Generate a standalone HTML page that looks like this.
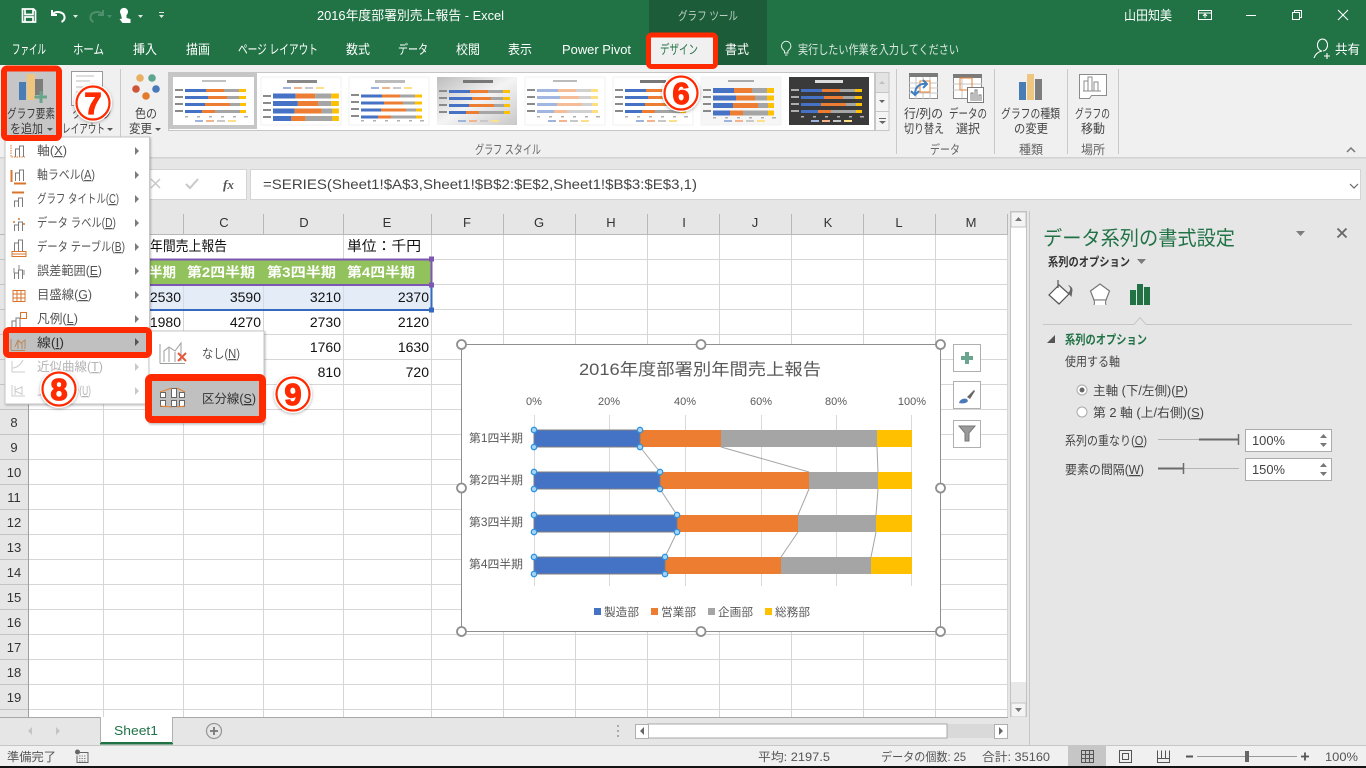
<!DOCTYPE html>
<html lang="ja"><head><meta charset="utf-8"><title>Excel</title>
<style>
html,body{margin:0;padding:0;width:1366px;height:768px;overflow:hidden;background:#fff}
svg{display:block;position:absolute;left:0;top:0}
text{font-family:"Liberation Sans","Noto Sans CJK JP",sans-serif;font-size:12.5px;fill:#444}
.w{fill:#fff;font-size:13px}
.m{font-size:12.5px;fill:#555}
.d{font-size:12.5px;fill:#b4b4b4}
.c{font-size:14px;fill:#111}
.h{font-size:13.5px;fill:#fff;font-weight:700}
.k{font-size:13px;fill:#333;text-anchor:middle}
.a{font-size:11px;fill:#595959;text-anchor:middle}
.g{font-size:11.5px;fill:#595959}
.s{font-size:12px;fill:#555}
.p{font-size:12.5px;fill:#444}
.n{font-family:"Liberation Sans",sans-serif;font-weight:700;font-size:31px;fill:#ff2a00;stroke:#ff2a00;stroke-width:1.2px;text-anchor:middle}
.u{text-decoration:underline}
</style></head><body>
<svg width="1366" height="768" viewBox="0 0 1366 768" xmlns="http://www.w3.org/2000/svg">
<defs>
<filter id="sh" x="-30%" y="-30%" width="160%" height="160%"><feDropShadow dx="0" dy="1" stdDeviation="1.6" flood-color="#000" flood-opacity=".3"/></filter>
<filter id="ms" x="-5%" y="-5%" width="110%" height="110%"><feDropShadow dx="1" dy="1" stdDeviation="1" flood-color="#000" flood-opacity=".25"/></filter>
<filter id="bl" x="-5%" y="-20%" width="110%" height="140%"><feGaussianBlur stdDeviation=".35"/></filter>
<linearGradient id="gr" x1="0" x2="1" y1="0" y2="1"><stop offset="0" stop-color="#bdbdbd"/><stop offset=".5" stop-color="#f4f4f4"/><stop offset="1" stop-color="#c8c8c8"/></linearGradient>
<g id="rows" filter="url(#bl)">
<rect x="0" y="0" width="21" height="3" fill="#4472c4"/><rect x="21" y="0" width="18" height="3" fill="#ed7d31"/><rect x="39" y="0" width="15" height="3" fill="#a5a5a5"/><rect x="54" y="0" width="7" height="3" fill="#ffc000"/>
<rect x="0" y="7" width="23" height="3" fill="#4472c4"/><rect x="23" y="7" width="19" height="3" fill="#ed7d31"/><rect x="42" y="7" width="12" height="3" fill="#a5a5a5"/><rect x="54" y="7" width="7" height="3" fill="#ffc000"/>
<rect x="0" y="14" width="20" height="3" fill="#4472c4"/><rect x="20" y="14" width="25" height="3" fill="#ed7d31"/><rect x="45" y="14" width="10" height="3" fill="#a5a5a5"/><rect x="55" y="14" width="6" height="3" fill="#ffc000"/>
<rect x="0" y="21" width="17" height="3" fill="#4472c4"/><rect x="17" y="21" width="13" height="3" fill="#ed7d31"/><rect x="30" y="21" width="25" height="3" fill="#a5a5a5"/><rect x="55" y="21" width="6" height="3" fill="#ffc000"/>
</g>
<g id="rows2" filter="url(#bl)">
<rect x="0" y="0" width="21" height="5" fill="#4472c4"/><rect x="21" y="0" width="18" height="5" fill="#ed7d31"/><rect x="39" y="0" width="15" height="5" fill="#a5a5a5"/><rect x="54" y="0" width="7" height="5" fill="#ffc000"/>
<rect x="0" y="7.500" width="23" height="5" fill="#4472c4"/><rect x="23" y="7.500" width="19" height="5" fill="#ed7d31"/><rect x="42" y="7.500" width="12" height="5" fill="#a5a5a5"/><rect x="54" y="7.500" width="7" height="5" fill="#ffc000"/>
<rect x="0" y="15" width="20" height="5" fill="#4472c4"/><rect x="20" y="15" width="25" height="5" fill="#ed7d31"/><rect x="45" y="15" width="10" height="5" fill="#a5a5a5"/><rect x="55" y="15" width="6" height="5" fill="#ffc000"/>
<rect x="0" y="22.500" width="17" height="5" fill="#4472c4"/><rect x="17" y="22.500" width="13" height="5" fill="#ed7d31"/><rect x="30" y="22.500" width="25" height="5" fill="#a5a5a5"/><rect x="55" y="22.500" width="6" height="5" fill="#ffc000"/>
</g>
<g id="lab" fill="#8a8a8a" filter="url(#bl)"><rect x="0" y="0" width="8" height="2"/><rect x="0" y="7" width="8" height="2"/><rect x="0" y="14" width="8" height="2"/><rect x="0" y="21" width="8" height="2"/></g>
<g id="leg" filter="url(#bl)"><rect x="0" y="0" width="8" height="2" fill="#9fb4dc"/><rect x="11" y="0" width="8" height="2" fill="#f3b48b"/><rect x="22" y="0" width="8" height="2" fill="#c8c8c8"/><rect x="33" y="0" width="8" height="2" fill="#ffe08a"/></g>
<g id="ax" fill="#b0b0b0" filter="url(#bl)"><rect x="0" y="0" width="3" height="1.500"/><rect x="12" y="0" width="3" height="1.500"/><rect x="24" y="0" width="3" height="1.500"/><rect x="36" y="0" width="3" height="1.500"/><rect x="48" y="0" width="3" height="1.500"/><rect x="59" y="0" width="4" height="1.500"/></g>
</defs>

<!-- title bar and tabs -->
<rect x="0" y="0" width="1366" height="65" fill="#217346"/>
<rect x="649" y="0" width="118" height="65" fill="#1d5c39"/>
<text class="w" x="317" y="20" textLength="187" lengthAdjust="spacingAndGlyphs">2016年度部署別売上報告  -  Excel</text>
<text class="w" x="678" y="20" textLength="60" lengthAdjust="spacingAndGlyphs" style="fill:#b9cfc2;font-size:12px">グラフ ツール</text>
<text class="w" x="1124" y="20" textLength="48" lengthAdjust="spacingAndGlyphs">山田知美</text>
<!-- QAT -->
<path d="M22.500 9h11l2 2v11h-13zM25 9.500v5h8v-5M25 22v-5h8v5" fill="none" stroke="#fff" stroke-width="1.700"/>
<path d="M52 10v5h5M52.500 14.500c3-4 11-3 12 2 .4 2.500-1 4.500-3 5.500" fill="none" stroke="#fff" stroke-width="2"/>
<path d="M73 15l5 0-2.500 3z" fill="#dfe9e3"/>
<path d="M103 10v5h-5M102.500 14.500c-3-4-11-3-12 2-.4 2.500 1 4.500 3 5.500" fill="none" stroke="#4f8f6c" stroke-width="2"/>
<path d="M107 15l5 0-2.500 3z" fill="#4f8f6c"/>
<path d="M120 12a4 4 0 1 1 6.500 3v3l4 1v4h-8l-3-4 2.500-.5z" fill="#fff"/>
<path d="M138 15l5 0-2.500 3z" fill="#dfe9e3"/>
<path d="M159 12h5v1h-5zM159 15l5 0-2.500 3z" fill="#dfe9e3"/>
<!-- window buttons -->
<path d="M1198.500 10.500h13v9h-13zM1198.500 13h13M1205 18v-4M1203 16l2-2 2 2" fill="none" stroke="#fff"/>
<path d="M1246 15.500h10" stroke="#fff"/>
<path d="M1292.500 12.500h7v7h-7zM1294.500 12.500v-2h7v7h-2" fill="none" stroke="#fff"/>
<path d="M1338 10l10 10M1348 10l-10 10" stroke="#fff" stroke-width="1.100"/>
<!-- tabs text -->
<text class="w" x="12" y="54" textLength="34" lengthAdjust="spacingAndGlyphs">ファイル</text>
<text class="w" x="73" y="54" textLength="31" lengthAdjust="spacingAndGlyphs">ホーム</text>
<text class="w" x="133" y="54" textLength="24" lengthAdjust="spacingAndGlyphs">挿入</text>
<text class="w" x="186" y="54" textLength="24" lengthAdjust="spacingAndGlyphs">描画</text>
<text class="w" x="238" y="54" textLength="80" lengthAdjust="spacingAndGlyphs">ページ レイアウト</text>
<text class="w" x="346" y="54" textLength="24" lengthAdjust="spacingAndGlyphs">数式</text>
<text class="w" x="398" y="54" textLength="30" lengthAdjust="spacingAndGlyphs">データ</text>
<text class="w" x="456" y="54" textLength="24" lengthAdjust="spacingAndGlyphs">校閲</text>
<text class="w" x="508" y="54" textLength="24" lengthAdjust="spacingAndGlyphs">表示</text>
<text class="w" x="562" y="54" textLength="69" lengthAdjust="spacingAndGlyphs">Power Pivot</text>
<text class="w" x="725" y="54" textLength="24" lengthAdjust="spacingAndGlyphs">書式</text>
<path d="M784.500 51c-2-2-3-3-3-5a4.700 4.700 0 0 1 9.400 0c0 2-1 3-3 5v2h-3.400zM785 55h2.500" fill="none" stroke="#e5efe9"/>
<text class="w" x="798" y="54" textLength="161" lengthAdjust="spacingAndGlyphs" style="fill:#dbe8e0;font-size:12.5px">実行したい作業を入力してください</text>
<path d="M1323 51a5 6 0 1 0-1 0c-5 1-7 4-8 7M1324 56h6M1327 53v6" fill="none" stroke="#fff" stroke-width="1.100"/>
<text class="w" x="1335" y="54" textLength="25" lengthAdjust="spacingAndGlyphs">共有</text>

<!-- ribbon -->
<rect x="0" y="65" width="1366" height="93" fill="#f0f0f0"/>
<rect x="0" y="157" width="1366" height="1.500" fill="#d2d2d2"/>
<rect x="0" y="158.500" width="1366" height="53" fill="#e6e6e6"/>
<g fill="#c9c9c9"><rect x="120" y="69" width="1" height="85"/><rect x="896" y="69" width="1" height="85"/><rect x="994" y="69" width="1" height="85"/><rect x="1067" y="69" width="1" height="85"/><rect x="1118" y="69" width="1" height="85"/></g>

<!-- add chart element -->
<rect x="7" y="71" width="49" height="64" fill="#c6c6c6"/>
<rect x="19" y="82" width="7" height="18" fill="#4a7db5"/><rect x="27" y="74" width="8" height="26" fill="#eec67f"/><rect x="35" y="79" width="8" height="16" fill="#7d7d7d"/>
<path d="M34.500 97h12.500M41 91v12" stroke="#69a48d" stroke-width="3" fill="none"/>
<text x="7" y="118" textLength="48" lengthAdjust="spacingAndGlyphs" style="fill:#3a3a3a">グラフ要素</text>
<text x="10" y="133" textLength="33" lengthAdjust="spacingAndGlyphs" style="fill:#3a3a3a">を追加</text>
<path d="M47 128h6l-3 3z" fill="#555"/>

<!-- quick layout -->
<rect x="71.500" y="71.500" width="31" height="34" fill="#fff" stroke="#9a9a9a"/>
<path d="M76 76h18M76 81h14M76 87h22M76 92h22M76 97h18" stroke="#bbb"/>
<text x="72" y="118" textLength="40" lengthAdjust="spacingAndGlyphs">クイック</text>
<text x="62" y="133" textLength="43" lengthAdjust="spacingAndGlyphs">レイアウト</text>
<path d="M107 128h6l-3 3z" fill="#555"/>

<!-- colors -->
<circle cx="140" cy="78" r="3.800" fill="#e8b060"/><circle cx="152" cy="78" r="3.800" fill="#5da58f"/><circle cx="136" cy="89" r="3.800" fill="#ce5539"/><circle cx="156" cy="89" r="3.800" fill="#4a78b8"/><circle cx="146" cy="96" r="3.800" fill="#e47a2b"/>
<text x="135" y="118" textLength="22" lengthAdjust="spacingAndGlyphs">色の</text>
<text x="129" y="133" textLength="23" lengthAdjust="spacingAndGlyphs">変更</text>
<path d="M155 128h6l-3 3z" fill="#555"/>

<!-- gallery -->
<rect x="168.500" y="72.500" width="706" height="58" fill="#fff" stroke="#c6c6c6"/>
<rect x="169" y="73" width="88" height="56" fill="#c6c6c6"/>
<rect x="173" y="77" width="81" height="48" fill="#fff"/>
<rect x="202" y="80" width="24" height="2" fill="#c0c0c0" filter="url(#bl)"/>
<use href="#rows" x="185" y="89"/><use href="#lab" x="175" y="89"/><use href="#ax" x="185" y="116"/><use href="#leg" x="195" y="120"/>

<rect x="261" y="77" width="80" height="48" fill="#fff" stroke="#f2f2f2"/>
<rect x="287" y="80" width="30" height="3" fill="#888" filter="url(#bl)"/><use href="#leg" x="283" y="87"/>
<g transform="translate(273 93.500) scale(1.080 1)"><use href="#rows2"/></g><use href="#lab" x="263" y="95"/>

<rect x="349" y="77" width="80" height="48" fill="#fff" stroke="#f2f2f2"/>
<rect x="375" y="80" width="30" height="3" fill="#bbb" filter="url(#bl)"/><use href="#leg" x="371" y="87"/>
<use href="#rows" x="361" y="94.500"/><use href="#lab" x="351" y="94"/><use href="#ax" x="361" y="120"/>

<rect x="437" y="77" width="80" height="48" fill="url(#gr)"/>
<rect x="463" y="80" width="30" height="3" fill="#777" filter="url(#bl)"/>
<use href="#rows" x="449" y="90"/><use href="#lab" x="439" y="90"/><use href="#leg" x="458" y="120"/>

<rect x="525" y="77" width="80" height="48" fill="#fff" stroke="#f2f2f2"/>
<rect x="553" y="80" width="24" height="2" fill="#bbb" filter="url(#bl)"/>
<g opacity=".5"><use href="#rows" x="537" y="89"/></g><use href="#lab" x="527" y="89"/><use href="#ax" x="537" y="116"/><use href="#leg" x="548" y="120"/>

<rect x="613" y="77" width="80" height="48" fill="#fff" stroke="#f2f2f2"/>
<rect x="640" y="80" width="26" height="3" fill="#777" filter="url(#bl)"/>
<use href="#rows" x="625" y="89"/><use href="#lab" x="615" y="89"/><use href="#ax" x="625" y="116"/><use href="#leg" x="636" y="120"/>

<rect x="701" y="77" width="80" height="48" fill="#f6f6f6" stroke="#f2f2f2"/>
<rect x="728" y="80" width="26" height="2" fill="#aaa" filter="url(#bl)"/>
<use href="#rows2" x="713" y="88"/><use href="#lab" x="703" y="89"/><use href="#ax" x="713" y="117"/><use href="#leg" x="724" y="120"/>

<rect x="789" y="77" width="80" height="48" fill="#3a3a3a"/>
<rect x="815" y="80" width="28" height="3" fill="#ddd" filter="url(#bl)"/>
<use href="#rows" x="801" y="89"/><g style="opacity:.8"><rect x="791" y="89" width="8" height="2" fill="#ccc"/><rect x="791" y="96" width="8" height="2" fill="#ccc"/><rect x="791" y="103" width="8" height="2" fill="#ccc"/><rect x="791" y="110" width="8" height="2" fill="#ccc"/></g><use href="#ax" x="801" y="116"/><use href="#leg" x="811" y="120"/>

<rect x="875.500" y="72.500" width="13.500" height="20" fill="#e3e3e3" stroke="#c6c6c6"/>
<rect x="875.500" y="92.500" width="13.500" height="19" fill="#f4f4f4" stroke="#c6c6c6"/>
<rect x="875.500" y="111.500" width="13.500" height="19" fill="#f4f4f4" stroke="#c6c6c6"/>
<path d="M879 84h6l-3-3z" fill="#c0c0c0"/><path d="M879 100h6l-3 3z" fill="#666"/><path d="M879 118h7v1h-7zM879 121h7l-3.500 3z" fill="#666"/>
<text x="475" y="154" textLength="66" lengthAdjust="spacingAndGlyphs" style="fill:#666">グラフ スタイル</text>

<!-- right ribbon icons -->
<rect x="909.500" y="73.500" width="28" height="25" fill="#fff" stroke="#8c8c8c"/><rect x="909" y="73" width="29" height="4" fill="#7b7b7b"/>
<path d="M909 83h29M909 88h29M909 93h29M916 77v22M923 77v22M930 77v22" stroke="#c4c4c4"/>
<rect x="920" y="81" width="10" height="11" fill="#fff" stroke="#e8822f"/>
<path d="M915 94c0-7 5-11 11-10M923 80l4 4-4 4M911 91l4 4 4-4" fill="none" stroke="#3f7fc0" stroke-width="2"/>
<rect x="953.500" y="74.500" width="28" height="24" fill="#fff" stroke="#8c8c8c"/><rect x="953" y="74" width="29" height="4" fill="#7b7b7b"/>
<path d="M953 84h29M953 90h29M962 78v20M972 78v20" stroke="#c4c4c4"/>
<rect x="960" y="78" width="12" height="12" fill="none" stroke="#e8822f"/>
<rect x="967.500" y="87.500" width="16" height="15" fill="#fff" stroke="#7b7b7b"/>
<path d="M971 101v-8h2v8M975 101v-11h2v11M979 101v-6h2v6" fill="none" stroke="#7b7b7b"/>
<rect x="1019" y="82" width="7" height="18" fill="#4a7db5"/><rect x="1027" y="74" width="7" height="26" fill="#eec67f"/><rect x="1035" y="79" width="7" height="21" fill="#7d7d7d"/>
<path d="M1079.500 74.500h27v21h-15l-2 3h-10z" fill="#fff" stroke="#8c8c8c"/>
<path d="M1084 91v-10h4v10M1088 91v-14h4v14M1094 91v-9h4v9M1083 91h18" fill="none" stroke="#8c8c8c"/>
<text x="904" y="118" textLength="39" lengthAdjust="spacingAndGlyphs">行/列の</text>
<text x="904" y="133" textLength="40" lengthAdjust="spacingAndGlyphs">切り替え</text>
<text x="949" y="118" textLength="38" lengthAdjust="spacingAndGlyphs">データの</text>
<text x="956" y="133" textLength="24" lengthAdjust="spacingAndGlyphs">選択</text>
<text x="1001" y="118" textLength="59" lengthAdjust="spacingAndGlyphs">グラフの種類</text>
<text x="1014" y="133" textLength="34" lengthAdjust="spacingAndGlyphs">の変更</text>
<text x="1075" y="118" textLength="35" lengthAdjust="spacingAndGlyphs">グラフの</text>
<text x="1081" y="133" textLength="24" lengthAdjust="spacingAndGlyphs">移動</text>
<text x="930" y="154" textLength="30" lengthAdjust="spacingAndGlyphs" style="fill:#666">データ</text>
<text x="1019" y="154" textLength="24" lengthAdjust="spacingAndGlyphs" style="fill:#666">種類</text>
<text x="1081" y="154" textLength="24" lengthAdjust="spacingAndGlyphs" style="fill:#666">場所</text>
<path d="M1347 152l4-4 4 4" fill="none" stroke="#777" stroke-width="1.500"/>

<!-- formula bar -->
<rect x="120.500" y="169.500" width="126" height="30" fill="#fff" stroke="#d4d4d4"/>
<rect x="250.500" y="169.500" width="1110" height="30" fill="#fff" stroke="#d4d4d4"/>
<path d="M151 179l9 9M160 179l-9 9" stroke="#c8c8c8" stroke-width="1.500"/>
<path d="M186 184l4 4 8-9" fill="none" stroke="#c8c8c8" stroke-width="2"/>
<text x="223" y="189" textLength="11" lengthAdjust="spacingAndGlyphs" style="font-family:'Liberation Serif',serif;font-style:italic;font-weight:700;font-size:13px;fill:#555">fx</text>
<text x="263" y="189" textLength="434" lengthAdjust="spacingAndGlyphs" style="font-size:14px;fill:#444">=SERIES(Sheet1!$A$3,Sheet1!$B$2:$E$2,Sheet1!$B$3:$E$3,1)</text>
<path d="M1350 184l4 4 4-4" fill="none" stroke="#666" stroke-width="1.200"/>

<!-- sheet -->
<rect x="0" y="211" width="1030" height="506" fill="#e6e6e6"/>
<rect x="29" y="235" width="979" height="482" fill="#fff"/>
<g stroke="#d6d6d6" fill="none">
<path d="M29 259.500H1008M29 284.500H1008M29 309.500H1008M29 334.500H1008M29 359.500H1008M29 384.500H1008M29 409.500H1008M29 434.500H1008M29 459.500H1008M29 484.500H1008M29 509.500H1008M29 534.500H1008M29 559.500H1008M29 584.500H1008M29 609.500H1008M29 634.500H1008M29 659.500H1008M29 684.500H1008M29 709.500H1008"/>
<path d="M103.500 259V717M183.500 259V717M263.500 259V717M343.500 235V717M431.500 235V717M503.500 235V717M575.500 235V717M647.500 235V717M719.500 235V717M791.500 235V717M863.500 235V717M935.500 235V717M1007.500 235V717"/>
</g>
<!-- header cols -->
<g stroke="#b8b8b8"><path d="M0 234.500H1008M103.500 214V234M183.500 214V234M263.500 214V234M343.500 214V234M431.500 214V234M503.500 214V234M575.500 214V234M647.500 214V234M719.500 214V234M791.500 214V234M863.500 214V234M935.500 214V234M1007.500 214V234"/></g>
<path d="M28.500 235V717" stroke="#9e9e9e"/>
<g stroke="#c4c4c4"><path d="M0 259.500H28M0 284.500H28M0 309.500H28M0 334.500H28M0 359.500H28M0 384.500H28M0 409.500H28M0 434.500H28M0 459.500H28M0 484.500H28M0 509.500H28M0 534.500H28M0 559.500H28M0 584.500H28M0 609.500H28M0 634.500H28M0 659.500H28M0 684.500H28M0 709.500H28"/></g>
<text class="k" x="224" y="227">C</text><text class="k" x="304" y="227">D</text><text class="k" x="387" y="227">E</text><text class="k" x="467" y="227">F</text><text class="k" x="539" y="227">G</text><text class="k" x="611" y="227">H</text><text class="k" x="684" y="227">I</text><text class="k" x="755" y="227">J</text><text class="k" x="828" y="227">K</text><text class="k" x="899" y="227">L</text><text class="k" x="971" y="227">M</text>
<g><text class="k" x="14" y="427">8</text><text class="k" x="14" y="452">9</text><text class="k" x="14" y="477">10</text><text class="k" x="14" y="502">11</text><text class="k" x="14" y="527">12</text><text class="k" x="14" y="552">13</text><text class="k" x="14" y="577">14</text><text class="k" x="14" y="602">15</text><text class="k" x="14" y="627">16</text><text class="k" x="14" y="652">17</text><text class="k" x="14" y="677">18</text><text class="k" x="14" y="702">19</text><text class="k" x="14" y="726">20</text></g>

<!-- cell content -->
<rect x="104" y="260" width="327" height="25" fill="#92c25b"/>
<rect x="104" y="286" width="327" height="23" fill="#e4ecf7"/>
<path d="M183.500 286V309M263.500 286V309M343.500 286V309" stroke="#d3dce8"/>
<text class="c" x="150" y="251" textLength="77" lengthAdjust="spacingAndGlyphs">年間売上報告</text>
<text class="c" x="347" y="251" textLength="74" lengthAdjust="spacingAndGlyphs">単位：千円</text>
<text class="h" x="149" y="277" textLength="27" lengthAdjust="spacingAndGlyphs">半期</text>
<text class="h" x="187" y="277" textLength="68" lengthAdjust="spacingAndGlyphs">第2四半期</text>
<text class="h" x="267" y="277" textLength="69" lengthAdjust="spacingAndGlyphs">第3四半期</text>
<text class="h" x="347" y="277" textLength="68" lengthAdjust="spacingAndGlyphs">第4四半期</text>
<g>
<text class="c" x="181" y="302" style="text-anchor:end">2530</text><text class="c" x="261" y="302" style="text-anchor:end">3590</text><text class="c" x="341" y="302" style="text-anchor:end">3210</text><text class="c" x="429" y="302" style="text-anchor:end">2370</text>
<text class="c" x="181" y="327" style="text-anchor:end">1980</text><text class="c" x="261" y="327" style="text-anchor:end">4270</text><text class="c" x="341" y="327" style="text-anchor:end">2730</text><text class="c" x="429" y="327" style="text-anchor:end">2120</text>
<text class="c" x="341" y="352" style="text-anchor:end">1760</text><text class="c" x="429" y="352" style="text-anchor:end">1630</text>
<text class="c" x="341" y="377" style="text-anchor:end">810</text><text class="c" x="429" y="377" style="text-anchor:end">720</text>
</g>
<rect x="104" y="258.500" width="327" height="2" fill="#7e57b4"/><rect x="104" y="284" width="327" height="2" fill="#7e57b4"/>
<rect x="430.500" y="260" width="2" height="24" fill="#7e57b4"/>
<rect x="104" y="309" width="327" height="2" fill="#3568c0"/><rect x="430.500" y="287" width="2" height="23" fill="#3568c0"/>
<rect x="429" y="256.500" width="5" height="5" fill="#7e57b4"/><rect x="429" y="282.500" width="5" height="5" fill="#7e57b4"/><rect x="429" y="307.500" width="5" height="5" fill="#3568c0"/>

<!-- chart -->
<rect x="461.500" y="344.500" width="479" height="287" fill="#fff" stroke="#8f8f8f"/>
<text x="579" y="375" textLength="242" lengthAdjust="spacingAndGlyphs" style="font-size:16.500px;fill:#595959">2016年度部署別年間売上報告</text>
<g stroke="#d9d9d9"><path d="M534.500 415V586M609.500 415V586M685.500 415V586M761.500 415V586M836.500 415V586M911.500 415V586"/></g>
<text class="a" x="534" y="405">0%</text><text class="a" x="609" y="405">20%</text><text class="a" x="685" y="405">40%</text><text class="a" x="761" y="405">60%</text><text class="a" x="836" y="405">80%</text><text class="a" x="912" y="405">100%</text>
<text class="g" x="469" y="442" textLength="54" lengthAdjust="spacingAndGlyphs">第1四半期</text>
<text class="g" x="469" y="484" textLength="54" lengthAdjust="spacingAndGlyphs">第2四半期</text>
<text class="g" x="469" y="526" textLength="54" lengthAdjust="spacingAndGlyphs">第3四半期</text>
<text class="g" x="469" y="568" textLength="54" lengthAdjust="spacingAndGlyphs">第4四半期</text>
<rect x="534" y="430" width="106" height="17" fill="#4472c4"/><rect x="640" y="430" width="81" height="17" fill="#ed7d31"/><rect x="721" y="430" width="156" height="17" fill="#a5a5a5"/><rect x="877" y="430" width="35" height="17" fill="#ffc000"/>
<rect x="534" y="472" width="126" height="17" fill="#4472c4"/><rect x="660" y="472" width="149" height="17" fill="#ed7d31"/><rect x="809" y="472" width="69" height="17" fill="#a5a5a5"/><rect x="878" y="472" width="34" height="17" fill="#ffc000"/>
<rect x="534" y="515" width="143" height="17" fill="#4472c4"/><rect x="677" y="515" width="121" height="17" fill="#ed7d31"/><rect x="798" y="515" width="78" height="17" fill="#a5a5a5"/><rect x="876" y="515" width="36" height="17" fill="#ffc000"/>
<rect x="534" y="557" width="131" height="17" fill="#4472c4"/><rect x="665" y="557" width="116" height="17" fill="#ed7d31"/><rect x="781" y="557" width="90" height="17" fill="#a5a5a5"/><rect x="871" y="557" width="41" height="17" fill="#ffc000"/>
<g fill="none" stroke="#a5a5a5"><path d="M640 447L660 472M721 447L809 472M877 447L878 472M660 489L677 515M809 489L798 515M878 489L876 515M677 532L665 557M798 532L781 557M876 532L871 557"/></g>
<g fill="none" stroke="#7f7f7f"><rect x="534" y="430" width="106" height="17"/><rect x="534" y="472" width="126" height="17"/><rect x="534" y="515" width="143" height="17"/><rect x="534" y="557" width="131" height="17"/></g>
<g fill="#a6d4f7" stroke="#2e93e0" stroke-width="1.300">
<circle cx="534" cy="430" r="2.700"/><circle cx="640" cy="430" r="2.700"/><circle cx="534" cy="447" r="2.700"/><circle cx="640" cy="447" r="2.700"/>
<circle cx="534" cy="472" r="2.700"/><circle cx="660" cy="472" r="2.700"/><circle cx="534" cy="489" r="2.700"/><circle cx="660" cy="489" r="2.700"/>
<circle cx="534" cy="515" r="2.700"/><circle cx="677" cy="515" r="2.700"/><circle cx="534" cy="532" r="2.700"/><circle cx="677" cy="532" r="2.700"/>
<circle cx="534" cy="557" r="2.700"/><circle cx="665" cy="557" r="2.700"/><circle cx="534" cy="574" r="2.700"/><circle cx="665" cy="574" r="2.700"/>
</g>
<rect x="594" y="608" width="7" height="7" fill="#4472c4"/><rect x="651" y="608" width="7" height="7" fill="#ed7d31"/><rect x="708" y="608" width="7" height="7" fill="#a5a5a5"/><rect x="765" y="608" width="7" height="7" fill="#ffc000"/>
<text class="g" x="604" y="616" textLength="35" lengthAdjust="spacingAndGlyphs">製造部</text>
<text class="g" x="661" y="616" textLength="35" lengthAdjust="spacingAndGlyphs">営業部</text>
<text class="g" x="718" y="616" textLength="35" lengthAdjust="spacingAndGlyphs">企画部</text>
<text class="g" x="775" y="616" textLength="35" lengthAdjust="spacingAndGlyphs">総務部</text>
<g fill="#fff" stroke="#8f8f8f" stroke-width="1.800">
<circle cx="461.500" cy="344.500" r="4.500"/><circle cx="701" cy="344.500" r="4.500"/><circle cx="940.500" cy="344.500" r="4.500"/><circle cx="461.500" cy="488" r="4.500"/><circle cx="940.500" cy="488" r="4.500"/><circle cx="461.500" cy="631.500" r="4.500"/><circle cx="701" cy="631.500" r="4.500"/><circle cx="940.500" cy="631.500" r="4.500"/>
</g>
<g fill="#fff" stroke="#b0b0b0"><rect x="953.500" y="344.500" width="27" height="27"/><rect x="953.500" y="381.500" width="27" height="27"/><rect x="953.500" y="420.500" width="27" height="27"/></g>
<path d="M967 352v12M961 358h12" stroke="#6aa590" stroke-width="4"/>
<path d="M959 403c1-4 5-5 8-4l1 2c-1 2-5 3-9 2z" fill="#4a78b8"/><path d="M967 397l7-7 1 1-5 8z" fill="#666"/>
<path d="M959 426h16l-6 7v8h-4v-8z" fill="#9a9a9a" stroke="#777"/>

<!-- scrollbar -->
<rect x="1010.500" y="211.500" width="16" height="506" fill="#e8e8e8" stroke="#c2c2c2"/>
<rect x="1011" y="227" width="15" height="455" fill="#fff"/>
<rect x="1011" y="212" width="15" height="15" fill="#f4f4f4" stroke="#c2c2c2"/>
<rect x="1011" y="703" width="15" height="14" fill="#f4f4f4" stroke="#c2c2c2"/>
<path d="M1015 221h7l-3.500-4z" fill="#777"/><path d="M1015 708h7l-3.500 4z" fill="#777"/>

<!-- sheet tabs -->
<rect x="0" y="717" width="1030" height="28" fill="#e6e6e6"/>
<path d="M0 717.500H1008" stroke="#a8a8a8"/>
<path d="M32 727v8l-4-4zM56 727v8l4-4z" fill="#c4c4c4"/>
<rect x="100" y="717" width="72" height="27" fill="#fff"/><rect x="100" y="742" width="73" height="2.500" fill="#217346"/>
<path d="M100.500 717v26M172.500 717v26" stroke="#b0b0b0"/>
<text x="114" y="735" textLength="44" lengthAdjust="spacingAndGlyphs" style="fill:#217346;font-size:13px">Sheet1</text>
<circle cx="214" cy="731" r="7.500" fill="none" stroke="#999" stroke-width="1.300"/><path d="M214 727v8M210 731h8" stroke="#777" stroke-width="1.800"/>
<path d="M618 725v2M618 730v2M618 735v2" stroke="#aaa" stroke-width="2"/>
<rect x="635" y="724" width="373" height="14" fill="#d9d9d9"/>
<rect x="648" y="724" width="299" height="14" fill="#fff" stroke="#a8a8a8"/>
<rect x="635.500" y="724.500" width="13" height="14" fill="#fff" stroke="#b0b0b0"/><rect x="994.500" y="724.500" width="13" height="14" fill="#fff" stroke="#b0b0b0"/>
<path d="M644 727v8l-4-4zM999 727v8l4-4z" fill="#666"/>

<!-- task pane -->
<rect x="1029" y="211" width="337" height="534" fill="#e6e6e6"/>
<path d="M1029.500 211V745" stroke="#c6c6c6"/>
<text x="1043" y="245" textLength="192" lengthAdjust="spacingAndGlyphs" style="font-size:20px;fill:#217346">データ系列の書式設定</text>
<path d="M1296 231h9l-4.500 5z" fill="#7c7c7c"/>
<path d="M1337.500 228.500l9 9M1346.500 228.500l-9 9" stroke="#666" stroke-width="1.800"/>
<text x="1048" y="266" textLength="82" lengthAdjust="spacingAndGlyphs" style="font-size:12px;font-weight:700;fill:#333">系列のオプション</text>
<path d="M1137 259h9l-4.500 5z" fill="#7c7c7c"/>
<path d="M1059 285l-10 10 10 9 10-10zM1058 280v8" fill="#fff" stroke="#555" stroke-width="1.200"/><path d="M1068 293c3-3 3-5 0-8 3 1 4.500 3 4.500 5l-1 7z" fill="#666"/>
<path d="M1100 284l9.500 7-3.500 9h-12l-3.500-9z" fill="#fff" stroke="#777" stroke-width="1.200"/><path d="M1094 305c.8-2 .8-3 0-5h12c-.8 2-.8 3 0 5" fill="#fff" stroke="#777"/>
<rect x="1130" y="290" width="6" height="15" fill="#217346"/><rect x="1137" y="284" width="6" height="21" fill="#217346"/><rect x="1144" y="287" width="6" height="18" fill="#217346"/>
<path d="M1043 324.500h91l6-7 6 7h206" fill="none" stroke="#c6c6c6"/>
<path d="M1047 343h8v-8z" fill="#555"/>
<text x="1065" y="344" textLength="82" lengthAdjust="spacingAndGlyphs" style="font-weight:700;fill:#217346">系列のオプション</text>
<text class="p" x="1065" y="366" textLength="55" lengthAdjust="spacingAndGlyphs">使用する軸</text>
<circle cx="1082" cy="390" r="5" fill="#fff" stroke="#aaa"/><circle cx="1082" cy="390" r="2.500" fill="#666"/>
<circle cx="1082" cy="412" r="5" fill="#fff" stroke="#aaa"/>
<text class="p" x="1093" y="395" textLength="95" lengthAdjust="spacingAndGlyphs">主軸 (下/左側)(<tspan class="u">P</tspan>)</text>
<text class="p" x="1093" y="417" textLength="111" lengthAdjust="spacingAndGlyphs">第 2 軸 (上/右側)(<tspan class="u">S</tspan>)</text>
<text class="p" x="1065" y="445" textLength="82" lengthAdjust="spacingAndGlyphs">系列の重なり(<tspan class="u">O</tspan>)</text>
<text class="p" x="1065" y="474" textLength="79" lengthAdjust="spacingAndGlyphs">要素の間隔(<tspan class="u">W</tspan>)</text>
<path d="M1158 439.500h81M1158 468.500h81" stroke="#b4b4b4"/>
<path d="M1199 439.500h39M1158 468.500h25" stroke="#6b6b6b" stroke-width="2"/>
<path d="M1238.500 434v11M1183.500 463v11" stroke="#6b6b6b" stroke-width="1.500"/>
<rect x="1245.500" y="429.500" width="86" height="22" fill="#fff" stroke="#ababab"/>
<rect x="1245.500" y="458.500" width="86" height="22" fill="#fff" stroke="#ababab"/>
<text x="1252" y="445" textLength="33" lengthAdjust="spacingAndGlyphs" style="font-size:13px">100%</text>
<text x="1252" y="474" textLength="33" lengthAdjust="spacingAndGlyphs" style="font-size:13px">150%</text>
<path d="M1320 438h7l-3.500-4zM1320 443h7l-3.500 4zM1320 467h7l-3.500-4zM1320 472h7l-3.500 4z" fill="#777"/>

<!-- status bar -->
<rect x="0" y="745" width="1366" height="21" fill="#f0f0f0"/>
<path d="M0 745.500H1366" stroke="#c6c6c6"/>
<rect x="0" y="766" width="1366" height="2" fill="#141414"/>
<text class="s" x="7" y="761" textLength="49" lengthAdjust="spacingAndGlyphs">準備完了</text>
<path d="M79 752.500h9v10h-11v-7" fill="none" stroke="#666"/><circle cx="77.500" cy="752" r="2.500" fill="#666"/><path d="M79 756h7M79 758.500h7M79 761h7" stroke="#888" stroke-dasharray="1.500 1"/>
<text class="s" x="758" y="761" textLength="72" lengthAdjust="spacingAndGlyphs">平均: 2197.5</text>
<text class="s" x="881" y="761" textLength="85" lengthAdjust="spacingAndGlyphs">データの個数: 25</text>
<text class="s" x="982" y="761" textLength="68" lengthAdjust="spacingAndGlyphs">合計: 35160</text>
<rect x="1068" y="746" width="38" height="20" fill="#c6c6c6"/>
<path d="M1081.500 750.500h12v12h-12zM1081.500 754.500h12M1081.500 758.500h12M1085.500 750.500v12M1089.500 750.500v12" fill="none" stroke="#555"/>
<path d="M1119.500 750.500h12v12h-12zM1122.500 753.500h6v6h-6z" fill="none" stroke="#555"/>
<path d="M1157.500 750.500v12h12v-12M1157.500 758.500h12M1161.500 750.500v8M1165.500 750.500v8" fill="none" stroke="#555"/>
<path d="M1186 756.500h7" stroke="#555" stroke-width="2"/>
<path d="M1197 756.500h100" stroke="#999"/><rect x="1245" y="751" width="4" height="11" fill="#666"/>
<path d="M1301 756.500h8M1305 752.500v8" stroke="#555" stroke-width="1.800"/>
<text class="s" x="1325" y="761" textLength="33" lengthAdjust="spacingAndGlyphs">100%</text>

<!-- dropdown menu -->
<rect x="5" y="137" width="144.500" height="267" fill="#fff" stroke="#c6c6c6" filter="url(#ms)"/>
<rect x="149" y="331" width="115" height="92" fill="#fff" stroke="#c6c6c6" filter="url(#ms)"/>
<text class="m" x="37" y="155" textLength="30" lengthAdjust="spacingAndGlyphs">軸(<tspan class="u">X</tspan>)</text>
<text class="m" x="37" y="179" textLength="58" lengthAdjust="spacingAndGlyphs">軸ラベル(<tspan class="u">A</tspan>)</text>
<text class="m" x="37" y="203" textLength="82" lengthAdjust="spacingAndGlyphs">グラフ タイトル(<tspan class="u">C</tspan>)</text>
<text class="m" x="37" y="227" textLength="79" lengthAdjust="spacingAndGlyphs">データ ラベル(<tspan class="u">D</tspan>)</text>
<text class="m" x="37" y="251" textLength="88" lengthAdjust="spacingAndGlyphs">データ テーブル(<tspan class="u">B</tspan>)</text>
<text class="m" x="37" y="275" textLength="65" lengthAdjust="spacingAndGlyphs">誤差範囲(<tspan class="u">E</tspan>)</text>
<text class="m" x="37" y="299" textLength="55" lengthAdjust="spacingAndGlyphs">目盛線(<tspan class="u">G</tspan>)</text>
<text class="m" x="37" y="323" textLength="41" lengthAdjust="spacingAndGlyphs">凡例(<tspan class="u">L</tspan>)</text>
<text class="d" x="37" y="371" textLength="66" lengthAdjust="spacingAndGlyphs">近似曲線(<tspan class="u">T</tspan>)</text>
<text class="d" x="37" y="395" textLength="54" lengthAdjust="spacingAndGlyphs">上下間バー(<tspan class="u">U</tspan>)</text>
<g fill="#7b7b7b"><path d="M135 147v8l4-4zM135 171v8l4-4zM135 195v8l4-4zM135 219v8l4-4zM135 243v8l4-4zM135 267v8l4-4zM135 291v8l4-4zM135 315v8l4-4z"/></g>
<path d="M135 363v8l4-4zM135 387v8l4-4z" fill="#c8c8c8"/>
<!-- menu icons -->
<g fill="none" stroke="#7b7b7b">
<path d="M15.500 157v-8h4v8M19.500 157v-11h4v11"/>
<path d="M15.500 181v-8h4v8M19.500 181v-11h4v11"/>
<path d="M14.500 207v-6h4v6M18.500 207v-9h4v9"/>
<path d="M14.500 231v-6h4v6M18.500 231v-9h4v9"/>
<path d="M14.500 251v-8h4v8M18.500 251v-11h4v11"/>
<path d="M14.500 279v-6h4v6M18.500 279v-9h4v9"/>
<path d="M12 327v-6h4v6M16 327v-9h4v9"/>
</g>
<path d="M11 145v12h14" fill="none" stroke="#d9742a" stroke-dasharray="1.500 1"/>
<path d="M11.500 170v12M14 183.500h12" fill="none" stroke="#d9742a" stroke-width="2"/>
<path d="M12 192.500h12" stroke="#d9742a" stroke-width="2"/>
<path d="M13 222h2M18 219h2M23 224h2" stroke="#d9742a" stroke-width="1.500"/>
<path d="M12 251.500h14v5h-14zM12 254h14" fill="none" stroke="#d9742a"/>
<path d="M14 268v5M19 265v5M24 270v5" stroke="#888"/>
<path d="M13 290.500h12v11h-12zM13 294h12M13 298h12M17 290.500v11M21 290.500v11" fill="none" stroke="#d9742a"/>
<rect x="20.500" y="312.500" width="6" height="6" fill="#fff" stroke="#d9742a"/>
<path d="M12 368c4 0 8-2 11-8M12 361v11h13" fill="none" stroke="#ccc"/>
<path d="M12 385v11h13M15 386v9M22 386v9M15 390l7-3M15 391l7 3" fill="none" stroke="#ccc"/>

<!-- highlighted line item -->
<rect x="6" y="330" width="143" height="25" fill="#c0c0c0" stroke="#ff2a00" stroke-width="6" rx="3"/>
<path d="M11 350.500h14M11 339v11M15 347l3-7 3 3 4-3v9M18 340v9M22 342v7" fill="none" stroke="#b98a5e"/>
<text class="m" x="37" y="347" textLength="27" lengthAdjust="spacingAndGlyphs" style="fill:#333">線(<tspan class="u">I</tspan>)</text>
<path d="M135 338v8l4-4z" fill="#555"/>

<!-- submenu -->
<path d="M160 363.500V344M160 363.500h25M164 362v-11l5-4 6 4 6-8v18M169 348v14M175 352v10" fill="none" stroke="#9c9c9c"/>
<path d="M178 353l8 8M186 353l-8 8" stroke="#e05a3c" stroke-width="2"/>
<text class="m" x="202" y="358" textLength="38" lengthAdjust="spacingAndGlyphs">なし(<tspan class="u">N</tspan>)</text>
<rect x="148.500" y="377.500" width="114" height="42" fill="#c0c0c0" stroke="#ff2a00" stroke-width="7" rx="3"/>
<g fill="#fff" stroke="#666"><rect x="160.500" y="392.500" width="5" height="5"/><rect x="160.500" y="400.500" width="5" height="6"/><rect x="171.500" y="388.500" width="5" height="9"/><rect x="171.500" y="400.500" width="5" height="6"/><rect x="179.500" y="392.500" width="5" height="5"/><rect x="179.500" y="400.500" width="5" height="6"/></g>
<path d="M160 392l12-4M177 388l8 4M160 406l12 1M177 407l8-1" stroke="#e8822f" fill="none"/>
<text class="m" x="202" y="403" textLength="54" lengthAdjust="spacingAndGlyphs" style="fill:#333">区分線(<tspan class="u">S</tspan>)</text>

<!-- red boxes -->
<rect x="4" y="68.500" width="55" height="69.500" fill="none" stroke="#ff2a00" stroke-width="6" rx="3"/>
<rect x="648.500" y="35" width="67" height="31.500" fill="#f0f0f0" stroke="#ff2a00" stroke-width="5" rx="3"/>
<text x="660" y="54" textLength="38" lengthAdjust="spacingAndGlyphs" style="font-size:13px;fill:#217346">デザイン</text>

<!-- numbered markers -->
<g filter="url(#sh)">
<circle cx="681" cy="93" r="19" fill="#fff"/><circle cx="681" cy="93" r="16.500" fill="#fff" stroke="#ff2a00" stroke-width="2.200"/>
<circle cx="93" cy="103" r="19" fill="#fff"/><circle cx="93" cy="103" r="16.500" fill="#fff" stroke="#ff2a00" stroke-width="2.200"/>
<circle cx="59" cy="389" r="19" fill="#fff"/><circle cx="59" cy="389" r="16.500" fill="#fff" stroke="#ff2a00" stroke-width="2.200"/>
<circle cx="293" cy="394" r="19" fill="#fff"/><circle cx="293" cy="394" r="16.500" fill="#fff" stroke="#ff2a00" stroke-width="2.200"/>
</g>
<text class="n" x="681" y="104">6</text>
<text class="n" x="93" y="114">7</text>
<text class="n" x="59" y="400">8</text>
<text class="n" x="293" y="405">9</text>
</svg>
</body></html>
